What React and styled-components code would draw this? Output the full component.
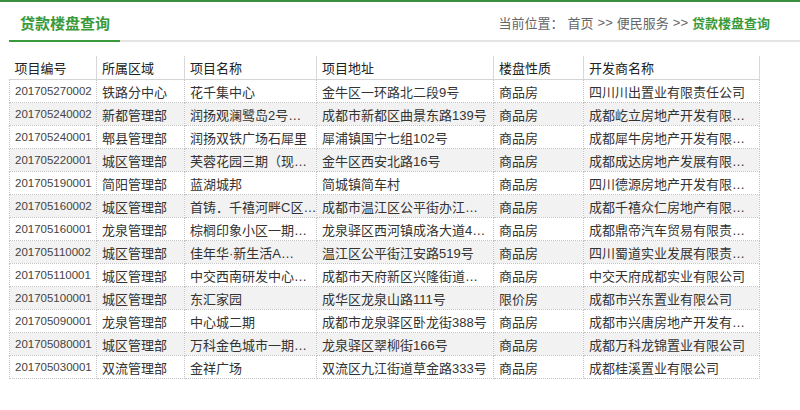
import React from "react";
import styled, { createGlobalStyle } from "styled-components";

const GlobalStyle = createGlobalStyle`
  html, body {
    margin: 0;
    padding: 0;
    background: #fff;
  }
  body {
    font-family: "Liberation Sans", "Noto Sans CJK SC", sans-serif;
    font-size: 13px;
    color: #333;
  }
`;

const Page = styled.div`
  width: 800px;
  height: 410px;
  border-top: 2px solid #3a8f3f;
  box-sizing: border-box;
  overflow: hidden;
`;

const TabBar = styled.div`
  display: flex;
  justify-content: space-between;
  align-items: stretch;
  height: 38px;
  margin-left: 9px;
  border-bottom: 2px solid #e4e4e4;
`;

const Tab = styled.div`
  width: 100px;
  padding-left: 11px;
  display: flex;
  align-items: center;
  margin-bottom: -2px;
  border-bottom: 2px solid #3a9a3a;
  color: #3a9a3a;
  font-size: 15px;
  font-weight: 700;
  padding-top: 2px;
`;

const Crumbs = styled.div`
  display: flex;
  align-items: center;
  gap: 4px;
  padding-right: 30px;
  padding-top: 2px;
  color: #666;
  font-size: 13px;
`;

const CrumbCurrent = styled.span`
  color: #3a9a3a;
  font-weight: 700;
`;

const Table = styled.table`
  margin: 14px 0 0 9px;
  width: 750px;
  table-layout: fixed;
  border-collapse: collapse;
`;

const HeadCell = styled.th`
  height: 23px;
  padding: 0 5px;
  text-align: left;
  font-weight: 400;
  font-size: 13px;
  color: #222;
  background: #fff;
  border-left: 1px solid #d8d8d8;
  border-bottom: 1px solid #d4d4d4;
  &:first-child {
    border-left: none;
  }
  &:last-child {
    border-right: 1px solid #d8d8d8;
  }
`;

const Row = styled.tr`
  height: 23px;
  background: ${(p) => (p.$striped ? "#f2f2f2" : "#fff")};
`;

const Cell = styled.td`
  padding: 0 5px;
  font-size: ${(p) => (p.$small ? "11.5px" : "13px")};
  color: ${(p) => (p.$small ? "#444" : "#333")};
  white-space: nowrap;
  overflow: hidden;
  border: 1px dotted #c4c4c4;
`;

const columns = [
  { key: "id", title: "项目编号", width: 87 },
  { key: "area", title: "所属区域", width: 88 },
  { key: "name", title: "项目名称", width: 132 },
  { key: "addr", title: "项目地址", width: 177 },
  { key: "kind", title: "楼盘性质", width: 90 },
  { key: "dev", title: "开发商名称", width: 176 },
];

const rows = [
  ["201705270002", "铁路分中心", "花千集中心", "金牛区一环路北二段9号", "商品房", "四川川出置业有限责任公司"],
  ["201705240002", "新都管理部", "润扬观澜鹭岛2号…", "成都市新都区曲景东路139号", "商品房", "成都屹立房地产开发有限…"],
  ["201705240001", "郫县管理部", "润扬双铁广场石犀里", "犀浦镇国宁七组102号", "商品房", "成都犀牛房地产开发有限…"],
  ["201705220001", "城区管理部", "芙蓉花园三期（现…", "金牛区西安北路16号", "商品房", "成都成达房地产发展有限…"],
  ["201705190001", "简阳管理部", "蓝湖城邦", "简城镇简车村", "商品房", "四川德源房地产开发有限…"],
  ["201705160002", "城区管理部", "首铸．千禧河畔C区…", "成都市温江区公平街办江…", "商品房", "成都千禧众仁房地产有限…"],
  ["201705160001", "龙泉管理部", "棕榈印象小区一期…", "龙泉驿区西河镇成洛大道4…", "商品房", "成都鼎帝汽车贸易有限责…"],
  ["201705110002", "城区管理部", "佳年华·新生活A…", "温江区公平街江安路519号", "商品房", "四川蜀道实业发展有限责…"],
  ["201705110001", "城区管理部", "中交西南研发中心…", "成都市天府新区兴隆街道…", "商品房", "中交天府成都实业有限公司"],
  ["201705100001", "城区管理部", "东汇家园", "成华区龙泉山路111号", "限价房", "成都市兴东置业有限公司"],
  ["201705090001", "龙泉管理部", "中心城二期", "成都市龙泉驿区卧龙街388号", "商品房", "成都市兴唐房地产开发有…"],
  ["201705080001", "城区管理部", "万科金色城市一期…", "龙泉驿区翠柳街166号", "商品房", "成都万科龙锦置业有限公司"],
  ["201705030001", "双流管理部", "金祥广场", "双流区九江街道草金路333号", "商品房", "成都桂溪置业有限公司"],
];

export default function App() {
  return (
    <>
      <GlobalStyle />
      <Page>
        <TabBar>
          <Tab>贷款楼盘查询</Tab>
          <Crumbs>
            <span>当前位置：</span>
            <span>首页</span>
            <span>&gt;&gt;</span>
            <span>便民服务</span>
            <span>&gt;&gt;</span>
            <CrumbCurrent>贷款楼盘查询</CrumbCurrent>
          </Crumbs>
        </TabBar>
        <Table>
          <colgroup>
            {columns.map((c) => (
              <col key={c.key} style={{ width: c.width }} />
            ))}
          </colgroup>
          <thead>
            <tr>
              {columns.map((c) => (
                <HeadCell key={c.key}>{c.title}</HeadCell>
              ))}
            </tr>
          </thead>
          <tbody>
            {rows.map((r, i) => (
              <Row key={r[0]} $striped={i % 2 === 1}>
                {r.map((v, j) => (
                  <Cell key={j} $small={j === 0}>
                    {v}
                  </Cell>
                ))}
              </Row>
            ))}
          </tbody>
        </Table>
      </Page>
    </>
  );
}
